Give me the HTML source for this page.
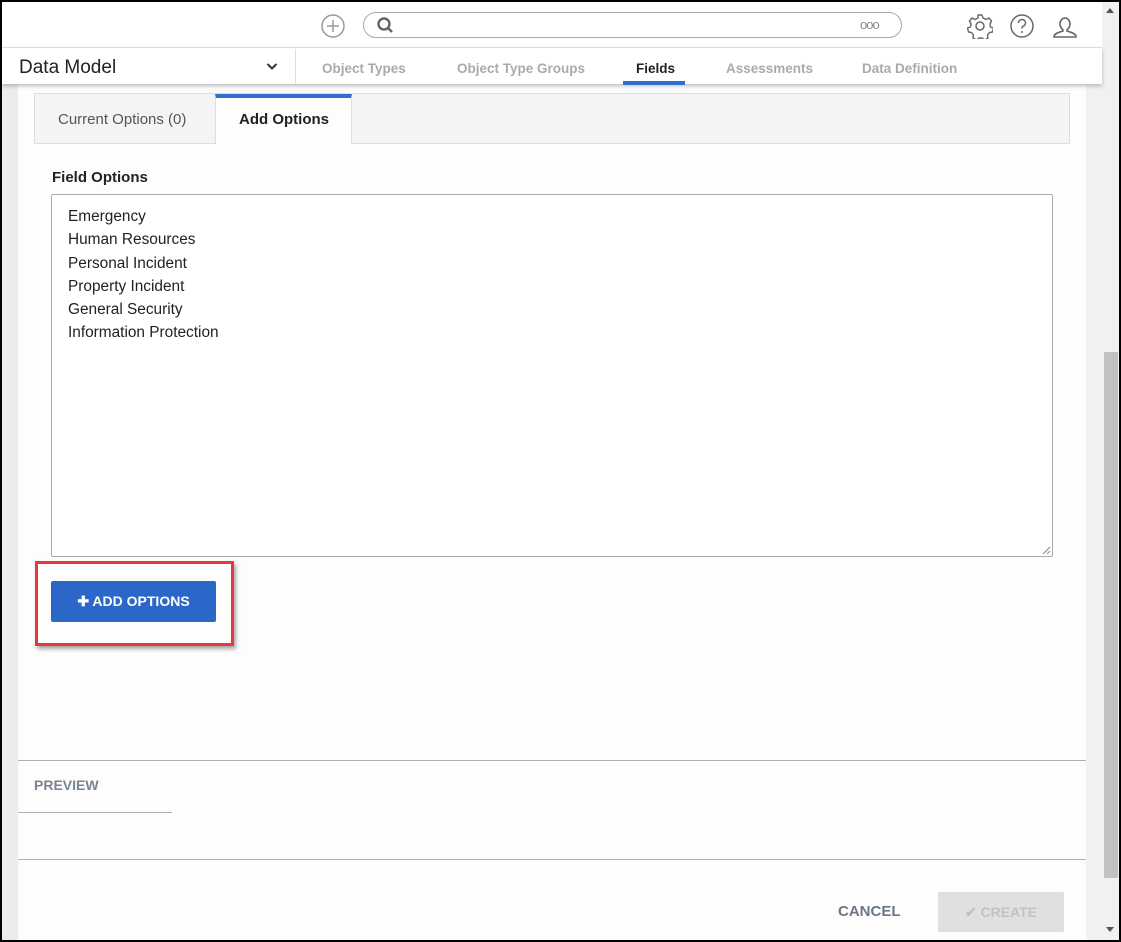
<!DOCTYPE html>
<html><head><style>
*{box-sizing:border-box;margin:0;padding:0}
body{width:1121px;height:942px;background:#000;position:relative;overflow:hidden;font-family:"Liberation Sans",sans-serif}
.a{position:absolute}
</style></head><body>
<div class="a" style="left:2px;top:2px;width:1117px;height:938px;background:#ececec"></div>
<div class="a" style="left:18px;top:84px;width:1068px;height:856px;background:#fdfdfd"></div>
<div class="a" style="left:1086px;top:84px;width:16px;height:856px;background:#f2f2f2"></div>
<div class="a" style="left:1102px;top:2px;width:17px;height:938px;background:#f1f1f1"></div>
<div class="a" style="left:1104px;top:352px;width:14px;height:526px;background:#c1c1c1"></div>
<div class="a" style="left:1106px;top:8px;width:0;height:0;border-left:4px solid transparent;border-right:4px solid transparent;border-bottom:5px solid #555"></div>
<div class="a" style="left:1106px;top:927px;width:0;height:0;border-left:4px solid transparent;border-right:4px solid transparent;border-top:5px solid #555"></div>
<div class="a" style="left:2px;top:2px;width:1100px;height:46px;background:#fff;border-bottom:1px solid #e2e2e2"></div>
<svg class="a" style="left:320px;top:13px" width="26" height="26" viewBox="0 0 26 26"><circle cx="13" cy="13" r="11" fill="none" stroke="#999" stroke-width="1.5"/><path d="M13 7v12M7 13h12" stroke="#999" stroke-width="1.5"/></svg>
<div class="a" style="left:363px;top:12px;width:539px;height:26px;border:1.5px solid #aaa;border-radius:13px"></div>
<svg class="a" style="left:376px;top:16px" width="20" height="18" viewBox="0 0 20 18"><circle cx="8" cy="8" r="5.5" fill="none" stroke="#666" stroke-width="2.4"/><path d="M12 12l4 4" stroke="#666" stroke-width="2.6"/></svg>
<div class="a" style="left:860px;top:17px;font-size:13px;color:#888;letter-spacing:-1px">ooo</div>
<svg class="a" style="left:967px;top:13px" width="26" height="26" viewBox="0 0 26 26"><circle cx="13" cy="13" r="4" fill="none" stroke="#666" stroke-width="1.5"/><path d="M11 2h4l1 3 3 1.5 3-1.5 2.5 3-1.5 3 .5 3 3 1-1 4-3 .5-2 2.5.5 3-3.5 2-2.5-2h-3l-2.5 2-3.5-2 .5-3-2-2.5-3-.5-1-4 3-1 .5-3-1.5-3 2.5-3 3 1.5 3-1.5z" fill="none" stroke="#666" stroke-width="1.4" stroke-linejoin="round"/></svg>
<svg class="a" style="left:1009px;top:13px" width="26" height="26" viewBox="0 0 26 26"><circle cx="13" cy="13" r="11" fill="none" stroke="#666" stroke-width="1.5"/><path d="M9.5 10a3.5 3.5 0 1 1 4.5 3.3c-1 .4-1 1-1 2.2" fill="none" stroke="#666" stroke-width="1.5"/><circle cx="13" cy="19" r="1" fill="#666"/></svg>
<svg class="a" style="left:1051px;top:12px" width="28" height="28" viewBox="0 0 28 28"><path d="M9 12a5 6 0 1 1 10 0c0 3-2 5-3 6v1c3 1 8 2 9 5v1H3v-1c1-3 6-4 9-5v-1c-1-1-3-3-3-6z" fill="none" stroke="#666" stroke-width="1.6" stroke-linejoin="round"/></svg>
<div class="a" style="left:2px;top:48px;width:1100px;height:36px;background:#fff;box-shadow:0 2px 4px rgba(0,0,0,.25)"></div>
<div class="a" style="left:19px;top:57px;font-size:19px;color:#222">Data Model</div>
<svg class="a" style="left:266px;top:62px" width="12" height="9" viewBox="0 0 12 9"><path d="M1.5 2l4.5 4.5L10.5 2" fill="none" stroke="#333" stroke-width="2"/></svg>
<div class="a" style="left:295px;top:49px;width:1px;height:35px;background:#ddd"></div>
<div class="a" style="left:322px;top:61px;font-size:13.5px;font-weight:bold;color:#aaa">Object Types</div>
<div class="a" style="left:457px;top:61px;font-size:13.5px;font-weight:bold;color:#aaa">Object Type Groups</div>
<div class="a" style="left:636px;top:61px;font-size:13.5px;font-weight:bold;color:#222">Fields</div>
<div class="a" style="left:623px;top:81px;width:62px;height:4px;background:#2f6fcf"></div>
<div class="a" style="left:726px;top:61px;font-size:13.5px;font-weight:bold;color:#aaa">Assessments</div>
<div class="a" style="left:862px;top:61px;font-size:13.5px;font-weight:bold;color:#aaa">Data Definition</div>
<div class="a" style="left:34px;top:93px;width:1036px;height:51px;background:#f4f4f4;border:1px solid #ddd"></div>
<div class="a" style="left:58px;top:111px;font-size:15px;color:#555">Current Options (0)</div>
<div class="a" style="left:215px;top:94px;width:137px;height:50px;background:#fdfdfd;border-left:1px solid #ddd;border-right:1px solid #ddd;border-top:4px solid #2f6fcf"></div>
<div class="a" style="left:239px;top:111px;font-size:15px;font-weight:bold;color:#222">Add Options</div>
<div class="a" style="left:52px;top:169px;font-size:15px;font-weight:bold;color:#222">Field Options</div>
<div class="a" style="left:51px;top:194px;width:1002px;height:363px;background:#fff;border:1px solid #aaa;border-radius:2px"></div>
<div class="a" style="left:68px;top:205px;font-size:15.4px;line-height:23.3px;color:#222">Emergency<br>Human Resources<br>Personal Incident<br>Property Incident<br>General Security<br>Information Protection</div>
<svg class="a" style="left:1041px;top:545px" width="10" height="10"><path d="M9 2L2 9M9 6L6 9" stroke="#888"/></svg>
<div class="a" style="left:35px;top:561px;width:199px;height:85px;border:3px solid #e8383d;box-shadow:2px 3px 4px rgba(0,0,0,.35)"></div>
<div class="a" style="left:51px;top:581px;width:165px;height:41px;background:#2a67c9;border-radius:2px;color:#fff;font-size:14px;font-weight:bold;line-height:41px;text-align:center">✚ ADD OPTIONS</div>
<div class="a" style="left:18px;top:760px;width:1068px;height:1px;background:#aab0b5"></div>
<div class="a" style="left:34px;top:777px;font-size:14px;font-weight:bold;color:#7a8590">PREVIEW</div>
<div class="a" style="left:18px;top:812px;width:154px;height:1px;background:#aab0b5"></div>
<div class="a" style="left:18px;top:859px;width:1068px;height:1px;background:#aab0b5"></div>
<div class="a" style="left:838px;top:903px;font-size:15px;font-weight:bold;color:#6b7785">CANCEL</div>
<div class="a" style="left:938px;top:892px;width:126px;height:40px;background:#e0e0e0;border-radius:2px;color:#c2c2c2;font-size:14px;font-weight:bold;line-height:40px;text-align:center">✔ CREATE</div>
</body></html>
